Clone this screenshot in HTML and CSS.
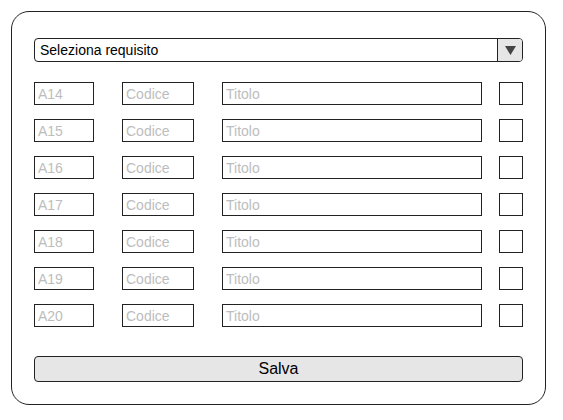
FILE: index.html
```html
<!DOCTYPE html>
<html>
<head>
<meta charset="utf-8">
<link rel="stylesheet" href="styles.css">
</head>
<body>
<div class="panel">
  <div class="select">
    <span class="select-label">Seleziona requisito</span>
    <span class="select-btn"><svg width="11" height="9" viewBox="0 0 11 9"><polygon points="0,0 11,0 5.5,9" fill="#444"/></svg></span>
  </div>
  <div class="rows">
    <div class="row"><input class="f code" placeholder="A14"><input class="f codice" placeholder="Codice"><input class="f titolo" placeholder="Titolo"><span class="check"></span></div>
    <div class="row"><input class="f code" placeholder="A15"><input class="f codice" placeholder="Codice"><input class="f titolo" placeholder="Titolo"><span class="check"></span></div>
    <div class="row"><input class="f code" placeholder="A16"><input class="f codice" placeholder="Codice"><input class="f titolo" placeholder="Titolo"><span class="check"></span></div>
    <div class="row"><input class="f code" placeholder="A17"><input class="f codice" placeholder="Codice"><input class="f titolo" placeholder="Titolo"><span class="check"></span></div>
    <div class="row"><input class="f code" placeholder="A18"><input class="f codice" placeholder="Codice"><input class="f titolo" placeholder="Titolo"><span class="check"></span></div>
    <div class="row"><input class="f code" placeholder="A19"><input class="f codice" placeholder="Codice"><input class="f titolo" placeholder="Titolo"><span class="check"></span></div>
    <div class="row"><input class="f code" placeholder="A20"><input class="f codice" placeholder="Codice"><input class="f titolo" placeholder="Titolo"><span class="check"></span></div>
  </div>
  <button class="save">Salva</button>
</div>
</body>
</html>
```
FILE: styles.css
```css
* { box-sizing: border-box; }
html, body { margin: 0; padding: 0; background: #fff; }
body { font-family: "Liberation Sans", Arial, sans-serif; }
.panel {
  margin: 11px 0 0 11px;
  width: 535px;
  height: 394px;
  border: 1px solid #222;
  border-radius: 18px;
  padding: 26px 22px 22px 22px;
  display: flex;
  flex-direction: column;
}
.select {
  height: 24px;
  border: 1px solid #222;
  border-radius: 4px;
  display: flex;
  align-items: stretch;
  overflow: hidden;
}
.select-label {
  flex: 1;
  font-size: 14px;
  line-height: 22px;
  padding-left: 5px;
  color: #000;
}
.select-btn {
  width: 25px;
  border-left: 1px solid #222;
  background: #e6e6e6;
  display: flex;
  align-items: center;
  justify-content: center;
}
.rows {
  margin-top: 20px;
  display: flex;
  flex-direction: column;
  gap: 14px;
}
.row {
  display: flex;
  height: 23px;
}
.f {
  height: 23px;
  border: 1px solid #222;
  border-radius: 0;
  margin: 0;
  padding: 0 0 0 3px;
  font-family: "Liberation Sans", Arial, sans-serif;
  font-size: 14px;
  background: #fff;
  outline: none;
}
.f::placeholder { color: #bdbdbd; opacity: 1; }
.code { width: 60px; }
.codice { width: 72px; margin-left: 28px; }
.titolo { width: 260px; margin-left: 28px; }
.check {
  width: 24px;
  height: 23px;
  margin-left: 17px;
  border: 1px solid #222;
}
.save {
  margin-top: 29px;
  height: 26px;
  width: 100%;
  border: 1px solid #222;
  border-radius: 4px;
  background: #e6e6e6;
  font-family: "Liberation Sans", Arial, sans-serif;
  font-size: 16px;
  color: #000;
  padding: 0;
}
```
